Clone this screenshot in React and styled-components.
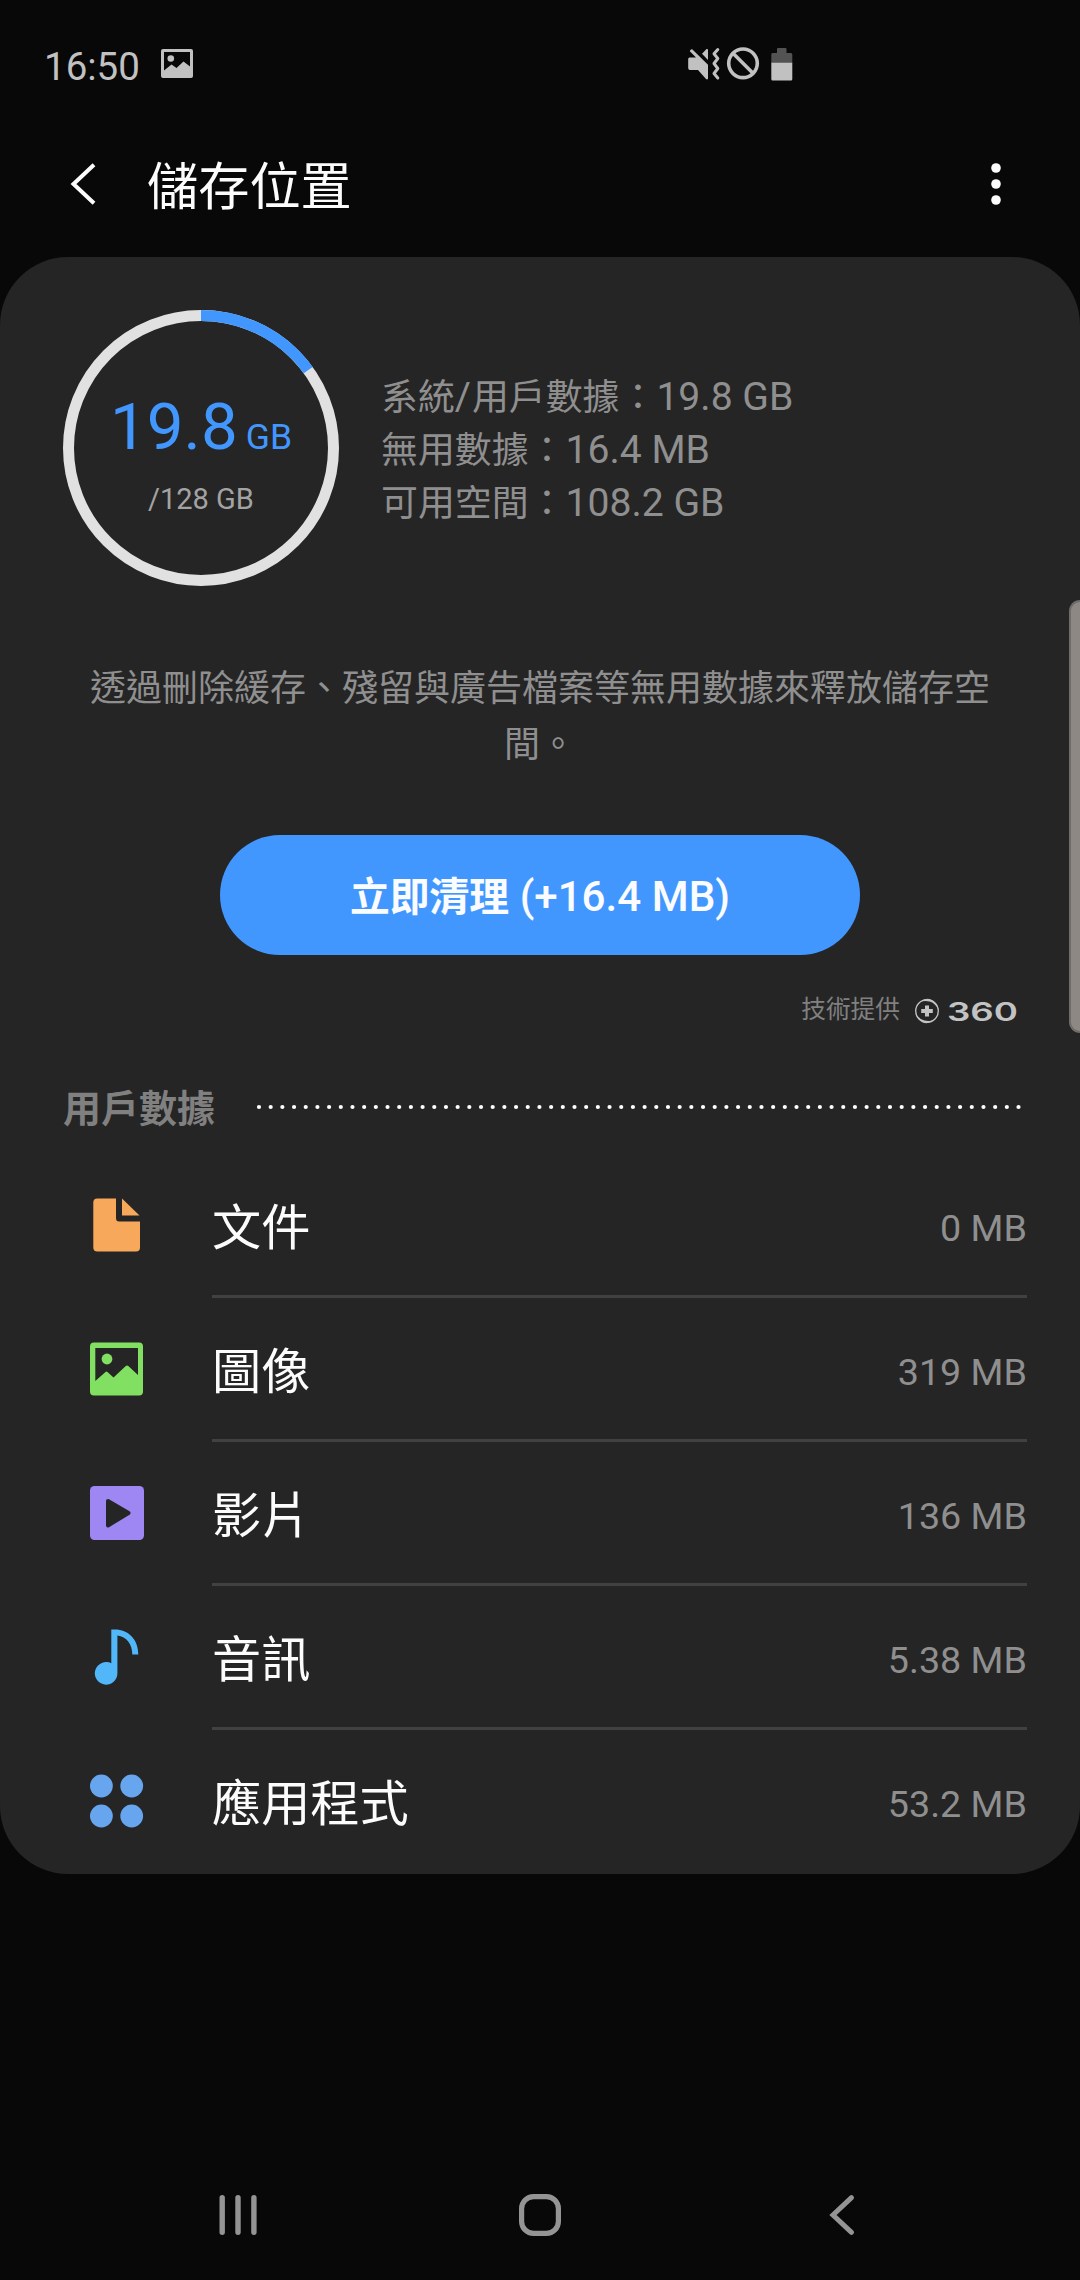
import React from "react";
import styled, { createGlobalStyle } from "styled-components";

const categories = [
  { id: "documents", label: "文件", size: "0 MB", Icon: DocumentIcon },
  { id: "images", label: "圖像", size: "319 MB", Icon: ImageIcon },
  { id: "videos", label: "影片", size: "136 MB", Icon: VideoIcon },
  { id: "audio", label: "音訊", size: "5.38 MB", Icon: AudioIcon },
  { id: "apps", label: "應用程式", size: "53.2 MB", Icon: AppsIcon },
];

const App = () => {
  return (
    <>
      <GlobalStyle />
      <Screen>
        <StatusBar />
        <Header>
          <BackIcon />
          <Title>儲存位置</Title>
          <MoreIcon />
        </Header>
        <Card>
          <Summary>
            <UsageRing percent={15} />
            <Stats>
              <Stat>
                系統<Slash>/</Slash>用戶數據：<Latin>19.8 GB</Latin>
              </Stat>
              <Stat>
                無用數據：<Latin>16.4 MB</Latin>
              </Stat>
              <Stat>
                可用空間：<Latin>108.2 GB</Latin>
              </Stat>
            </Stats>
          </Summary>
          <Description>
            透過刪除緩存、殘留與廣告檔案等無用數據來釋放儲存空間。
          </Description>
          <CleanButton>
            <strong>立即清理</strong>
            <Latin> (+16.4 MB)</Latin>
          </CleanButton>
          <Provider>
            <ProviderText>技術提供</ProviderText>
            <ProviderLogo />
          </Provider>
          <SectionHeader>
            <SectionTitle>用戶數據</SectionTitle>
            <DottedLine />
          </SectionHeader>
          <List>
            {categories.map(({ id, label, size, Icon }) => (
              <Row key={id}>
                <IconSlot>
                  <Icon />
                </IconSlot>
                <RowBody>
                  <RowLabel>{label}</RowLabel>
                  <RowSize>{size}</RowSize>
                </RowBody>
              </Row>
            ))}
          </List>
        </Card>
        <NavBar />
        <EdgeHandle />
      </Screen>
    </>
  );
};

export default App;

function StatusBar() {
  return (
    <StatusContainer>
      <Clock>16:50</Clock>
      <svg width="32" height="30" viewBox="0 0 32 30">
        <path
          fill="#c1c1c1"
          fillRule="evenodd"
          d="M2 0H30a2 2 0 0 1 2 2V27a2 2 0 0 1-2 2H2a2 2 0 0 1-2-2V2a2 2 0 0 1 2-2ZM3 3V21.500L10.500 15.500 15.500 19 22.500 12.500 29 17.500V3Z"
        />
        <circle cx="9.800" cy="9.500" r="3.300" fill="#c1c1c1" />
      </svg>
      <StatusIcons>
        <svg width="33" height="34" viewBox="0 0 33 34">
          <g fill="#c1c1c1">
            <path d="M1.500 10.500H8L1.800 4.200Q2.300 2 4.200 2.200L20 17.800V31.500Q19.500 33 18 32L10 23H2Q.200 23 .200 21V12Q.200 10.500 1.500 10.500Z" />
            <path d="M14 6.800 18.500 2Q20 1.500 20 3V13Z" />
          </g>
          <path
            d="M29.800 2.500 26 6.800 29.800 11.500 26 16.500 29.800 21.500 26 26.500 29.800 31"
            stroke="#c1c1c1"
            strokeWidth="3"
            strokeLinecap="round"
            strokeLinejoin="round"
            fill="none"
          />
        </svg>
        <svg width="34" height="34" viewBox="0 0 34 34">
          <g stroke="#c1c1c1" strokeWidth="3.600" fill="none">
            <circle cx="17" cy="16.300" r="14.300" />
            <path d="M7 6.300 27 26.300" />
          </g>
        </svg>
        <Battery width="22" height="34" viewBox="0 0 22 34">
          <path
            fill="#535353"
            d="M6 2Q6 1 7 1H14.500Q15.500 1 15.500 2V6H20Q21.300 6 21.300 7.500V16H.300V7.500Q.300 6 1.500 6H6Z"
          />
          <path
            fill="#c1c1c1"
            d="M.300 15.700H21.300V32Q21.300 33.500 20 33.500H1.600Q.300 33.500 .300 32Z"
          />
        </Battery>
      </StatusIcons>
    </StatusContainer>
  );
}

function BackIcon() {
  return (
    <svg width="26" height="44" viewBox="0 0 26 44">
      <path
        d="M24 2.700 3.500 22 24 41.300"
        stroke="#fcfcfc"
        strokeWidth="4"
        fill="none"
      />
    </svg>
  );
}

function MoreIcon() {
  return (
    <svg width="10" height="44" viewBox="0 0 10 44">
      <g fill="#fcfcfc">
        <circle cx="5" cy="6" r="4.800" />
        <circle cx="5" cy="22" r="4.800" />
        <circle cx="5" cy="38" r="4.800" />
      </g>
    </svg>
  );
}

function UsageRing({ percent }) {
  return (
    <Ring>
      <RingChart viewBox="0 0 276 276">
        <g fill="none" strokeWidth="11" transform="rotate(-90 138 138)">
          <circle cx="138" cy="138" r="132.500" stroke="#e1e1e1" />
          <circle
            cx="138"
            cy="138"
            r="132.500"
            stroke="#4297ff"
            pathLength="100"
            strokeDasharray={`${percent} 100`}
          />
        </g>
      </RingChart>
      <Used>
        19.8<small>GB</small>
      </Used>
      <Total>/128 GB</Total>
    </Ring>
  );
}

function ProviderLogo() {
  return (
    <svg width="108" height="36" viewBox="0 -5 108 36">
      <circle
        cx="13"
        cy="13"
        r="11.300"
        stroke="#c3c3c3"
        strokeWidth="1.300"
        fill="none"
      />
      <g fill="#c3c3c3">
        <path d="M6 4Q14-2.500 21 4.500 24 8 24.500 12 21.500 5 15.500 3.500 10.500 2.300 6 4Z" />
        <path d="M20 22Q12 28.500 5 21.500 2 18.500 1.500 15 4.500 21 10.500 22.500 15.500 23.700 20 22Z" />
        <path d="M11 7.500H15V11H18.800V15H15V18.500H11V15H7.200V11H11Z" />
      </g>
      <text
        x="33"
        y="22.500"
        fill="#c3c3c3"
        fontFamily="Inter, sans-serif"
        fontWeight="600"
        fontSize="25.500"
        textLength="71"
        lengthAdjust="spacingAndGlyphs"
      >
        360
      </text>
    </svg>
  );
}

function DottedLine() {
  return (
    <svg width="766" height="6" viewBox="0 0 766 6">
      <path
        d="M3 3H763"
        stroke="#fff"
        strokeWidth="4.200"
        strokeLinecap="round"
        strokeDasharray="0 11.685"
      />
    </svg>
  );
}

function DocumentIcon() {
  return (
    <svg width="54" height="54" viewBox="0 0 54 54">
      <g fill="#f8a85a">
        <path d="M7.300.500H26V20Q26 23.500 29 23.500H50V49.500Q50 53.500 46 53.500H7.300Q3.300 53.500 3.300 49.500V4.500Q3.300.500 7.300.500Z" />
        <path d="M32 .500 49.500 17.500H32Z" />
      </g>
    </svg>
  );
}

function ImageIcon() {
  return (
    <svg width="54" height="54" viewBox="0 0 54 54">
      <path
        fill="#81e061"
        fillRule="evenodd"
        d="M4 .500H49Q53 .500 53 4.500V49.500Q53 53.500 49 53.500H4Q0 53.500 0 49.500V4.500Q0 .500 4 .500ZM5.300 6V39L15.500 30Q16.500 29.200 17.500 30L23.500 35.500 35.800 24Q37.100 22.800 38.300 24L48 33V6Z"
      />
      <circle cx="17" cy="17" r="5.400" fill="#81e061" />
    </svg>
  );
}

function VideoIcon() {
  return (
    <svg width="54" height="54" viewBox="0 0 54 54">
      <rect width="54" height="54" rx="4.500" fill="#9e86f3" />
      <path
        d="M18 15 38.500 27 18 39.500Z"
        fill="#252525"
        stroke="#252525"
        strokeWidth="4"
        strokeLinejoin="round"
      />
    </svg>
  );
}

function AudioIcon() {
  return (
    <svg width="54" height="56" viewBox="0 0 54 56">
      <path
        fill="#51b7f8"
        d="M21.300.500H25C38 .500 48.300 10 48.300 25.500H42.300C42.300 15 36.500 7.500 27.400 6.500V44A11.300 11.300 0 1 1 21.300 34.300Z"
      />
    </svg>
  );
}

function AppsIcon() {
  return (
    <svg width="54" height="54" viewBox="0 0 54 54">
      <g fill="#67a5ef">
        <circle cx="11.400" cy="12" r="11.400" />
        <circle cx="41.700" cy="12" r="11.400" />
        <circle cx="11.400" cy="42" r="11.400" />
        <circle cx="41.700" cy="42" r="11.400" />
      </g>
    </svg>
  );
}

function NavBar() {
  return (
    <NavContainer>
      <svg width="44" height="44" viewBox="0 0 44 44">
        <path
          d="M6.200 4.700V39.300M22 4.700V39.300M37.900 4.700V39.300"
          stroke="#949494"
          strokeWidth="5.400"
          strokeLinecap="round"
        />
      </svg>
      <svg width="44" height="44" viewBox="0 0 44 44">
        <rect
          x="3.600"
          y="3.600"
          width="36.800"
          height="36.800"
          rx="12"
          stroke="#949494"
          strokeWidth="5.200"
          fill="none"
        />
      </svg>
      <svg width="44" height="44" viewBox="0 0 44 44">
        <path
          d="M31.500 4.700 13 22 31.500 39.300"
          stroke="#949494"
          strokeWidth="5"
          strokeLinecap="round"
          fill="none"
        />
      </svg>
    </NavContainer>
  );
}

const GlobalStyle = createGlobalStyle`
  * {
    box-sizing: border-box;
  }
  body {
    margin: 0;
    background: #080808;
    font-family: Roboto, "Noto Sans CJK TC", sans-serif;
  }
  svg {
    display: block;
    flex: none;
  }
`;

const Screen = styled.div`
  position: relative;
  width: 1080px;
  height: 2280px;
  display: flex;
  flex-direction: column;
  overflow: hidden;
`;

const StatusContainer = styled.div`
  height: 128px;
  padding: 0 287px 0 44px;
  display: flex;
  align-items: center;
`;

const Clock = styled.div`
  width: 117px;
  padding-top: 5px;
  color: #c1c1c1;
  font-size: 38.500px;
`;

const StatusIcons = styled.div`
  margin-left: auto;
  display: flex;
  gap: 5px;
`;

const Battery = styled.svg`
  margin-left: 6px;
`;

const Header = styled.header`
  height: 129px;
  padding: 0 79px 18px 70px;
  display: flex;
  align-items: center;
`;

const Title = styled.h1`
  margin: 0 auto 0 51px;
  padding-top: 9px;
  color: #fcfcfc;
  font-size: 51.200px;
  font-weight: 400;
  line-height: 60px;
`;

const Card = styled.main`
  height: 1617px;
  padding: 53px 53px 0 63px;
  display: flex;
  flex-direction: column;
  background: #252525;
  border-radius: 68px;
`;

const Summary = styled.section`
  display: flex;
  align-items: center;
`;

const Ring = styled.div`
  width: 276px;
  height: 276px;
  display: grid;
  grid-template-rows: 166px 40px;
  justify-items: center;
  align-items: end;
`;

const RingChart = styled.svg`
  grid-area: 1 / 1 / 4 / 2;
  width: 276px;
  height: 276px;
`;

const Used = styled.div`
  grid-area: 1 / 1;
  color: #4297ff;
  font-size: 65.500px;
  line-height: 78px;
  small {
    margin-left: 8px;
    font-size: 35.500px;
  }
`;

const Total = styled.div`
  grid-area: 2 / 1;
  color: #a3a3a3;
  font-size: 29px;
  line-height: 34px;
`;

const Stats = styled.div`
  margin: 4px 0 0 42px;
`;

const Latin = styled.span`
  font-size: 1.060em;
`;

const Slash = styled(Latin)`
  padding: 0 1px 0 0;
`;

const Stat = styled.div`
  height: 53px;
  color: #8f8f8f;
  font-size: 36.900px;
  line-height: 53px;
  white-space: nowrap;
`;

const Description = styled.p`
  width: 920px;
  margin: 75px 0 0 17px;
  color: #8f8f8f;
  font-size: 36px;
  line-height: 56px;
  text-align: center;
`;

const CleanButton = styled.button`
  width: 640px;
  height: 120px;
  margin: 62px 0 0 157px;
  padding: 0 0 3px;
  border: 0;
  border-radius: 60px;
  background: #4297ff;
  color: #fafcff;
  font-family: inherit;
  font-size: 39.800px;
  font-weight: 500;
  strong {
    font-weight: 700;
  }
`;

const Provider = styled.div`
  height: 26px;
  margin: 43px 5px 0 0;
  display: flex;
  justify-content: flex-end;
  align-items: center;
  gap: 14px;
  color: #808080;
  font-size: 24.700px;
`;

const ProviderText = styled.span`
  padding-bottom: 8px;
`;

const SectionHeader = styled.div`
  height: 48px;
  margin-top: 59px;
  padding-right: 5px;
  display: flex;
  justify-content: space-between;
  align-items: center;
`;

const SectionTitle = styled.h2`
  margin: 0;
  padding-top: 4px;
  color: #808080;
  font-size: 38px;
  font-weight: 700;
  line-height: 48px;
`;

const List = styled.ul`
  margin: 23px 0 0;
  padding: 0;
  list-style: none;
`;

const Row = styled.li`
  height: 144px;
  display: flex;
`;

const IconSlot = styled.div`
  width: 149px;
  padding: 0 0 2px 27px;
  display: flex;
  align-items: center;
`;

const RowBody = styled.div`
  flex: 1;
  padding-top: 7px;
  display: flex;
  justify-content: space-between;
  align-items: center;
  border-bottom: 3px solid #414141;
  ${Row}:last-child & {
    border-color: transparent;
  }
`;

const RowLabel = styled.span`
  color: #fcfcfc;
  font-size: 49.200px;
  line-height: 60px;
`;

const RowSize = styled.span`
  color: #8f8f8f;
  font-size: 37.700px;
`;

const NavContainer = styled.nav`
  height: 130px;
  margin-top: auto;
  padding: 0 216px;
  display: flex;
  justify-content: space-between;
  align-items: center;
`;

const EdgeHandle = styled.div`
  position: absolute;
  top: 600px;
  right: 0;
  width: 11px;
  height: 433px;
  border: 2px solid #6f6d6b;
  border-right: 0;
  border-radius: 12px 0 0 12px;
  background: #8d8884;
`;
